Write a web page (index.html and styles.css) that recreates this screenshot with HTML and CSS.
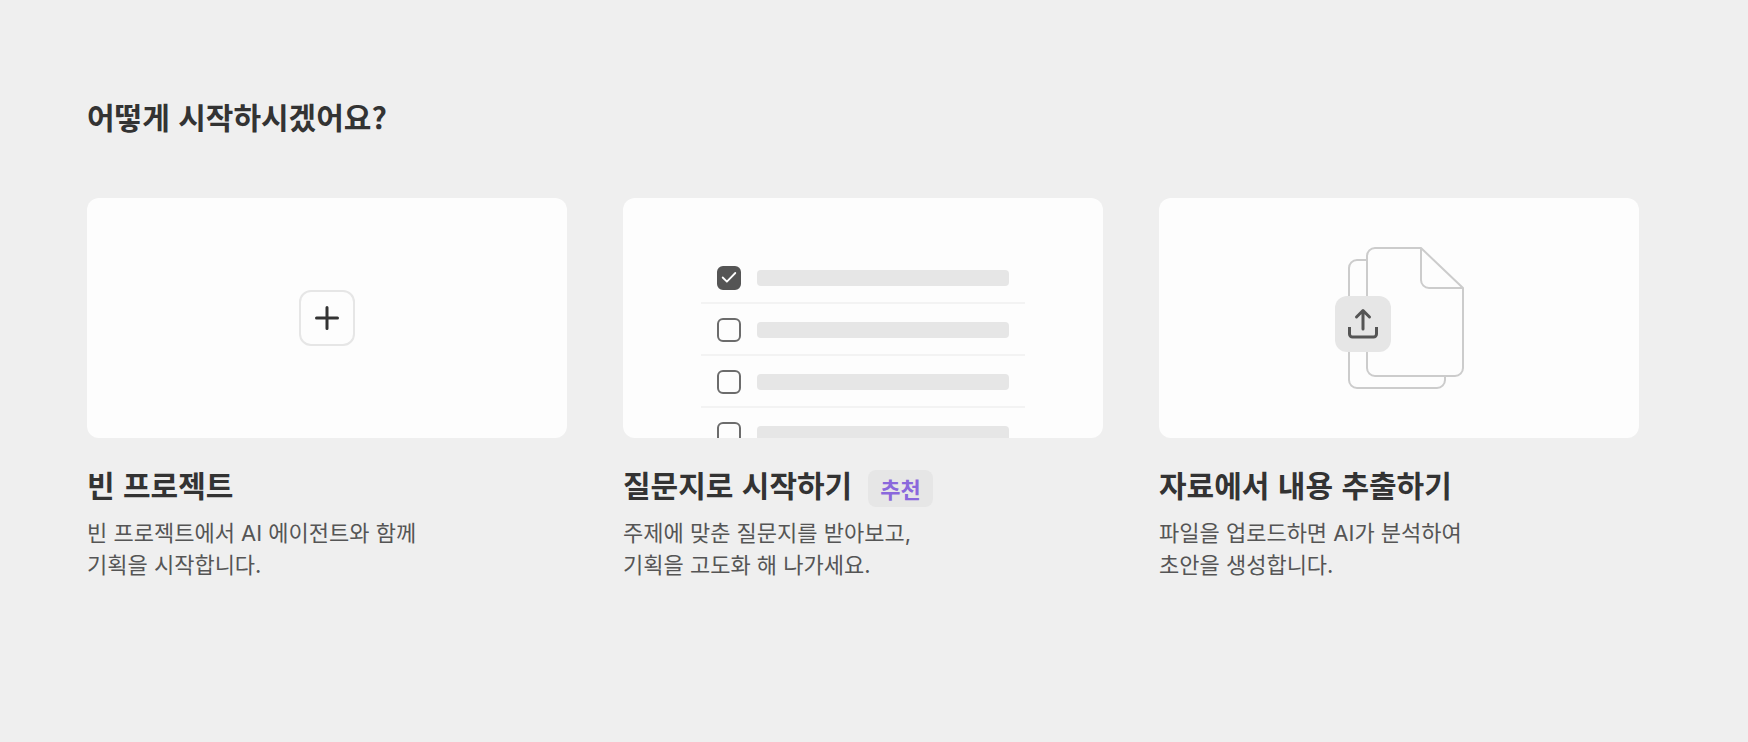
FILE: index.html
```html
<!DOCTYPE html>
<html lang="ko">
<head>
<meta charset="utf-8">
<meta name="viewport" content="width=device-width, initial-scale=1">
<title>어떻게 시작하시겠어요?</title>
<link rel="stylesheet" href="styles.css">
</head>
<body>
<main class="start">
  <h1 class="start-title">어떻게 시작하시겠어요?</h1>
  <div class="options">
    <article class="option">
      <div class="preview">
        <button class="add-button" type="button" aria-label="빈 프로젝트">
          <svg width="28" height="28" viewBox="0 0 28 28" fill="none" stroke="#333" stroke-width="3" stroke-linecap="round"><path d="M14 3.5v21M3.5 14h21"/></svg>
        </button>
      </div>
      <div class="option-head"><h2 class="option-title">빈 프로젝트</h2></div>
      <p class="option-text">빈 프로젝트에서 AI 에이전트와 함께<br>기획을 시작합니다.</p>
    </article>

    <article class="option">
      <div class="preview preview-list">
        <ul class="questions">
          <li class="question"><span class="tick"><input class="tick-box" type="checkbox" aria-label="질문 1" checked><svg class="tick-mark" viewBox="0 0 24 24" fill="none" stroke="#fff" stroke-width="1.8" stroke-linecap="round" stroke-linejoin="round"><path d="M5.7 11.5 9.9 15.7 18.3 7"/></svg></span><span class="bar"></span></li>
          <li class="question"><span class="tick"><input class="tick-box" type="checkbox" aria-label="질문 2"></span><span class="bar"></span></li>
          <li class="question"><span class="tick"><input class="tick-box" type="checkbox" aria-label="질문 3"></span><span class="bar"></span></li>
          <li class="question"><span class="tick"><input class="tick-box" type="checkbox" aria-label="질문 4"></span><span class="bar"></span></li>
        </ul>
      </div>
      <div class="option-head"><h2 class="option-title">질문지로 시작하기</h2><span class="badge">추천</span></div>
      <p class="option-text">주제에 맞춘 질문지를 받아보고,<br>기획을 고도화 해 나가세요.</p>
    </article>

    <article class="option">
      <div class="preview">
        <div class="files">
          <svg class="files-art" width="128" height="142" viewBox="0 0 128 142" fill="#fdfdfd" stroke="#ccc" stroke-width="2" stroke-linejoin="round">
            <path d="M32 13H22a8 8 0 0 0-8 8V133a8 8 0 0 0 8 8H102a8 8 0 0 0 8-8V128"/>
            <path d="M40 1H86L128 41V121a8 8 0 0 1-8 8H40a8 8 0 0 1-8-8V9a8 8 0 0 1 8-8Z"/>
            <path d="M86 1V33a8 8 0 0 0 8 8H128" fill="none"/>
          </svg>
          <button class="upload-button" type="button" aria-label="파일 업로드">
            <svg width="32" height="32" viewBox="0 0 32 32" fill="none" stroke="#555" stroke-width="3" stroke-linecap="round" stroke-linejoin="round"><path d="M16 21V3M9.5 9 16 2.5 22.5 9"/><path d="M2.500 19V26a3 3 0 0 0 3 3H26.500a3 3 0 0 0 3-3V19" stroke-linecap="butt"/></svg>
          </button>
        </div>
      </div>
      <div class="option-head"><h2 class="option-title">자료에서 내용 추출하기</h2></div>
      <p class="option-text">파일을 업로드하면 AI가 분석하여<br>초안을 생성합니다.</p>
    </article>
  </div>
</main>
</body>
</html>
```
FILE: styles.css
```css
* {
  box-sizing: border-box;
}

body {
  margin: 0;
  background: #efefef;
  color: #333;
  font-family: "Noto Sans CJK KR", sans-serif;
}

.start {
  padding: 96px 109px 96px 87px;
}

.start-title {
  margin: 0 0 62px;
  font-size: 30px;
  line-height: 40px;
  font-weight: 700;
}

.options {
  display: grid;
  grid-template-columns: repeat(3, 1fr);
  gap: 56px;
}

.preview {
  display: flex;
  align-items: center;
  justify-content: center;
  height: 240px;
  border-radius: 12px;
  background: #fdfdfd;
  overflow: hidden;
}

.preview-list {
  align-items: flex-start;
  padding-top: 54px;
}

.add-button,
.upload-button {
  display: flex;
  align-items: center;
  justify-content: center;
  width: 56px;
  height: 56px;
  padding: 0;
  border: 0;
  border-radius: 12px;
  cursor: pointer;
}

.add-button {
  border: 2px solid #e6e6e6;
  background: #fdfdfd;
}

.questions {
  width: 324px;
  margin: 0;
  padding: 0;
  list-style: none;
}

.question {
  display: flex;
  align-items: center;
  gap: 16px;
  padding: 14px 16px 12px;
  border-bottom: 2px solid #f3f3f3;
}

.tick {
  display: grid;
  width: 24px;
  height: 24px;
}

.tick-box,
.tick-mark {
  grid-area: 1 / 1;
  width: 24px;
  height: 24px;
  margin: 0;
}

.tick-mark {
  pointer-events: none;
}

.tick-box {
  appearance: none;
  border: 2px solid #6c6c6c;
  border-radius: 6px;
  background: #fdfdfd;
}

.tick-box:checked {
  border-color: #555;
  background: #555;
}

.bar {
  flex: 1;
  height: 16px;
  border-radius: 4px;
  background: #e6e6e6;
}

.files {
  position: relative;
}

.files-art {
  display: block;
  overflow: visible;
}

.upload-button {
  position: absolute;
  top: 49px;
  left: 0;
  background: #e6e6e6;
}

.option-head {
  display: flex;
  align-items: flex-start;
  gap: 16px;
  min-height: 43px;
  margin-top: 26px;
}

.option-title {
  margin: 0;
  font-size: 30px;
  line-height: 40px;
  font-weight: 700;
}

.badge {
  margin-top: 6px;
  padding: 0 12px;
  border-radius: 8px;
  background: #e6e6e6;
  color: #8a68dc;
  font-size: 22px;
  line-height: 37px;
  font-weight: 700;
}

.option-text {
  margin: 10px 0 0;
  color: #555;
  font-family: Inter, "Noto Sans CJK KR", sans-serif;
  font-size: 22px;
  line-height: 32px;
}
```
